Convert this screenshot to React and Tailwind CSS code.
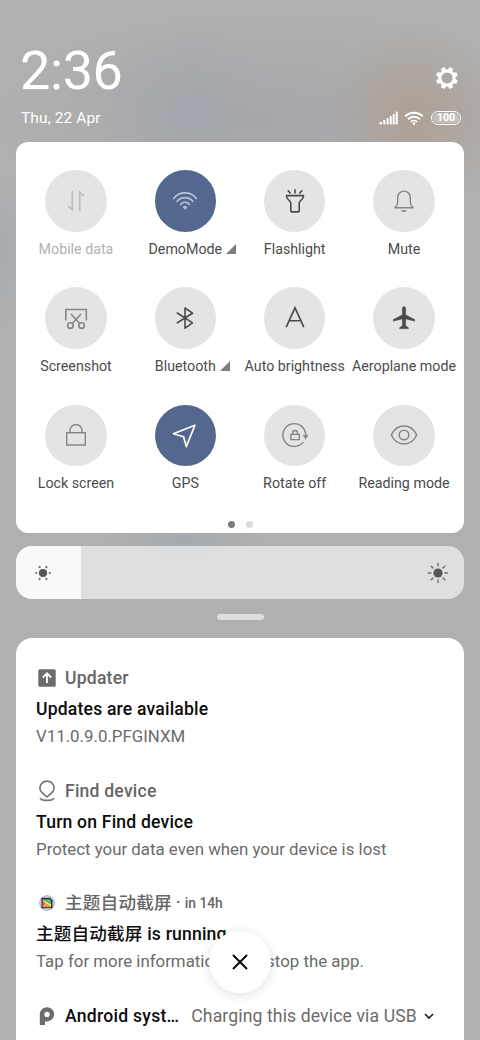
import React from 'react';
import clsx from 'clsx';

const Icon = ({ children, className }) => (
  <svg
    viewBox="0 0 32 32"
    className={clsx('w-8 h-8', className)}
    fill="none"
    stroke="currentColor"
    strokeWidth="1.6"
    strokeLinecap="round"
    strokeLinejoin="round"
  >
    {children}
  </svg>
);

const icons = {
  data: (
    <g strokeWidth="1.7" strokeLinecap="butt" strokeLinejoin="miter">
      <path d="M12.3 5.8v19.4" />
      <path d="M13 26.6L7.4 21.6l1.2-1.2 4.400 3.400z" fill="currentColor" stroke="none" />
      <path d="M19.7 26.500V7" />
      <path d="M19 5.400l5.600 5-1.200 1.200-4.400-3.400z" fill="currentColor" stroke="none" />
    </g>
  ),
  wifi: (
    <g>
      <path d="M4.6 13.4a14.6 14.6 0 0 1 22.8 0" />
      <path d="M8.1 16.4a10.2 10.2 0 0 1 15.8 0" />
      <path d="M11.5 19.4a5.9 5.9 0 0 1 9 0" />
      <path d="M16 24l-1.900-1.900a2.800 2.800 0 0 1 3.800 0z" fill="currentColor" strokeWidth="1" />
    </g>
  ),
  flashlight: (
    <g>
      <path d="M9.2 5.800l1.900 2.300M16 4.800v3.200M22.800 5.800l-1.900 2.300" />
      <path d="M7.600 10.600h16.800v1.200c0 2.800-4.200 3.600-4.200 6.400v7.700c0 .6-.4 1-1 1h-6.400c-.6 0-1-.4-1-1v-7.700c0-2.800-4.200-3.600-4.200-6.400z" />
    </g>
  ),
  bell: (
    <g strokeWidth="1.4">
      <path d="M7 22.800c1.800-1.600 2.700-3.400 2.700-5.800v-4.600a6.300 6.300 0 0 1 12.600 0V17c0 2.400.9 4.200 2.700 5.800z" />
      <path d="M13.800 25.600h4.400l-1.200 1h-2z" fill="currentColor" strokeWidth="0.8" />
    </g>
  ),
  screenshot: (
    <g strokeLinecap="butt" strokeLinejoin="miter">
      <path d="M5.800 18.400V7.500h20.500v10.900" />
      <path d="M11 12l8.700 9.500M21 12l-8.700 9.500" />
      <circle cx="10.400" cy="23.600" r="2.800" />
      <circle cx="21.600" cy="23.600" r="2.800" />
    </g>
  ),
  bluetooth: <path d="M8.300 11l15.200 9.800-7.500 5.400V6l7.500 5.200L8.300 20.800" />,
  auto: <path d="M7.200 25.200L16 5.800l8.800 19.400M10 18.800h12" strokeLinejoin="miter" strokeLinecap="butt" />,
  plane: (
    <path
      d="M16 4.600c1 0 1.700.9 1.700 2v6.200l9 4.800v1.700l-9-2.400v6.800l2.700 1.800v1.300h-8.800v-1.300l2.700-1.800v-6.800l-9 2.400v-1.700l9-4.800V6.600c0-1.100.7-2 1.700-2z"
      fill="currentColor"
      strokeWidth="0.3"
    />
  ),
  lock: (
    <g strokeWidth="1.4" strokeLinejoin="miter">
      <rect x="6.700" y="13.700" width="18.600" height="12.300" />
      <path d="M10 13.700v-2.200a6 6 0 0 1 12 0v2.200" />
    </g>
  ),
  gps: <path d="M25.900 6.200L4.400 14.800l10.200 3 2.700 9.800z" strokeWidth="1.700" />,
  rotate: (
    <g strokeWidth="1.4">
      <path d="M24 23.400A11.400 11.400 0 1 1 26.700 16" />
      <path d="M24.300 16.200h4.800l-2.400 3.800z" fill="currentColor" strokeWidth="0.500" />
      <rect x="11.900" y="15.400" width="8.400" height="5.200" />
      <path d="M13.700 15.200v-1.300a2.400 2.400 0 0 1 4.800 0v1.300" />
    </g>
  ),
  eye: (
    <g strokeWidth="1.500">
      <path d="M3.300 16C6 10.300 10.600 7 16 7s10 3.300 12.700 9C26 21.700 21.400 25 16 25S6 21.700 3.300 16z" />
      <circle cx="16" cy="16" r="4.800" />
    </g>
  ),
};

const tiles = [
  { icon: 'data', label: 'Mobile data', tone: 'text-[#bdbdbd]', text: 'text-[#b2b2b2]' },
  { icon: 'wifi', label: 'DemoMode', on: true, tone: 'text-[#b9c3d8]', more: true },
  { icon: 'flashlight', label: 'Flashlight', tone: 'text-[#4a4a4a]' },
  { icon: 'bell', label: 'Mute', tone: 'text-[#858585]' },
  { icon: 'screenshot', label: 'Screenshot', tone: 'text-[#858585]' },
  { icon: 'bluetooth', label: 'Bluetooth', tone: 'text-[#4a4a4a]', more: true },
  { icon: 'auto', label: 'Auto brightness', tone: 'text-[#4a4a4a]' },
  { icon: 'plane', label: 'Aeroplane mode', tone: 'text-[#4a4a4a]' },
  { icon: 'lock', label: 'Lock screen', tone: 'text-[#858585]' },
  { icon: 'gps', label: 'GPS', on: true, tone: 'text-white' },
  { icon: 'rotate', label: 'Rotate off', tone: 'text-[#858585]' },
  { icon: 'eye', label: 'Reading mode', tone: 'text-[#858585]' },
];

const Tile = ({ icon, label, on, tone, text = 'text-[#4c4c4c]', more }) => (
  <div className="flex flex-col items-center h-[117.3px]">
    <div
      className={clsx(
        'w-[61.5px] h-[61.5px] rounded-full flex items-center justify-center',
        on ? 'bg-[#54678f]' : 'bg-[#e4e4e4]',
        tone
      )}
    >
      <Icon>{icons[icon]}</Icon>
    </div>
    <div className={clsx('relative mt-[7.200px] text-[14.25px] leading-5 whitespace-nowrap', text)}>
      {label}
      {more && (
        <svg viewBox="0 0 10 10" className="absolute left-full top-[5px] ml-1 w-2.5 h-2.5 text-[#7d7d7d]">
          <path d="M10 0v10H0z" fill="currentColor" />
        </svg>
      )}
    </div>
  </div>
);

const GearIcon = () => (
  <svg viewBox="0 0 24 24" className="w-6 h-6" fill="none" stroke="currentColor">
    <circle cx="12" cy="12" r="7.1" strokeWidth="3" />
    {[22.5, 67.5, 112.5, 157.5, 202.5, 247.5, 292.5, 337.5].map((a) => (
      <path key={a} d="M9.700 4.200L10.200 1.200h3.600l.500 3z" transform={`rotate(${a} 12 12)`} fill="currentColor" strokeWidth="0.300" />
    ))}
  </svg>
);

const SignalIcon = () => (
  <svg viewBox="0 0 19 14" className="w-[19px] h-3.5" fill="currentColor">
    <rect x="0.500" y="11" width="2.500" height="2.500" rx="0.800" />
    <rect x="4.300" y="9" width="2" height="4.500" rx="0.600" />
    <rect x="7.600" y="7" width="2" height="6.500" rx="0.600" />
    <rect x="10.700" y="5" width="2" height="8.500" rx="0.600" />
    <rect x="13.700" y="3" width="2" height="10.500" rx="0.600" />
    <rect x="16.700" y="0.500" width="2" height="13" rx="0.600" />
  </svg>
);

const StatusWifi = () => (
  <svg viewBox="0 0 20 14" className="w-5 h-3.5" fill="none" stroke="currentColor" strokeWidth="2">
    <path d="M1.200 5.300a12.400 12.400 0 0 1 17.600 0" />
    <path d="M4.100 8.300a8.300 8.300 0 0 1 11.800 0" />
    <path d="M6.900 10.900a4.500 4.500 0 0 1 6.200 0" strokeWidth="1.600" />
    <circle cx="10" cy="12.600" r="1.300" fill="currentColor" stroke="none" />
  </svg>
);

const Sun = ({ big }) => {
  const angles = big ? [0, 45, 90, 135, 180, 225, 270, 315] : [30, 90, 150, 210, 270, 330];
  return (
    <svg viewBox="0 0 22 22" className="w-[22px] h-[22px] text-[#555]" stroke="currentColor" strokeLinecap="round">
      <circle cx="11" cy="11" r={big ? 4.6 : 4.1} fill="currentColor" stroke="none" />
      {angles.map((a) => (
        <path
          key={a}
          d={big ? 'M11 4V1.400' : 'M11 4.300v-.2'}
          strokeWidth={big ? 1.4 : 2.2}
          opacity="0.8"
          transform={`rotate(${a} 11 11)`}
        />
      ))}
    </svg>
  );
};

const UpdaterIcon = () => (
  <svg viewBox="0 0 18 18" className="w-[18px] h-[18px]" fill="none">
    <rect x="0.300" y="0.300" width="17.400" height="17.400" rx="1.500" fill="#6c6c6c" />
    <path d="M9 14V4.500M4.800 8.500L9 4.300l4.200 4.200" stroke="#fff" strokeWidth="1.800" />
  </svg>
);

const FindIcon = () => (
  <svg viewBox="0 0 18 22" className="w-[18px] h-[22px]" fill="none" stroke="#777" strokeWidth="1.700">
    <path d="M9 16.800C6 14.400 1.900 12 1.900 8.200a7.100 7.100 0 0 1 14.200 0c0 3.800-4.100 6.200-7.100 8.600z" />
    <path d="M2 18.300c1.200 1.500 3 2 4.500 2h5c1.500 0 3.300-.5 4.500-2" />
  </svg>
);

const ThemeIcon = () => (
  <svg viewBox="0 0 16 16" className="w-4 h-4">
    <circle cx="8" cy="8" r="7.300" fill="#dbe4ee" stroke="#8098b5" strokeWidth="0.800" />
    <path d="M2.500 2.800h8.500l2.500 2.500v7.900h-11z" fill="#222b38" />
    <path d="M3.800 4.200L12 9v3H3.800z" fill="#f0e34a" />
    <path d="M3.800 5.200v6.800l3-3.200z" fill="#ef4fa6" />
    <path d="M4 4.200h6.800L12 6v3z" fill="#45c77a" />
    <path d="M4.500 12.200l3.500-3.500 4 3.500z" fill="#f08a3c" />
  </svg>
);

const AndroidP = () => (
  <svg viewBox="0 0 16 20" className="w-4 h-5">
    <path
      d="M.8 19V8.500A7.300 7.300 0 0 1 8 1.200a7.100 7.100 0 0 1 0 14.200H6V19z M8 5.800a2.600 2.600 0 1 0 0 5.200a2.600 2.600 0 0 0 0-5.200z"
      fill="#6c6c6c"
      fillRule="evenodd"
    />
  </svg>
);

const Notification = ({ icon, app, time, title, body }) => (
  <div className="h-[112.4px]">
    <div className="flex items-center h-[26px] text-[#666] font-medium">
      <div className="w-[22px] mr-[7px] flex justify-center">{icon}</div>
      <span className="tracking-[0.2px]">{app}</span>
      {time && (
        <span className="ml-1 text-[17px]">
          · <span className="text-[13.8px]">{time}</span>
        </span>
      )}
    </div>
    <div className="mt-[5.300px] h-[26px] leading-[26px] font-medium tracking-[0.18px] text-[#0c0c0c]">{title}</div>
    <div className="mt-[0.800px] h-[26px] leading-[26px] text-[16.850px] text-[#6b6b6b]">{body}</div>
  </div>
);

const App = () => (
  <div className="relative w-[480px] h-[1040px] overflow-hidden flex flex-col px-4 bg-[#b0b0b0] bg-[radial-gradient(circle_at_415px_115px,#b09c8ab0_0,#b09c8a60_45px,#b09c8a00_90px),radial-gradient(circle_at_185px_112px,#9ca2ac80_0,#9ca2ac00_90px),radial-gradient(ellipse_280px_110px_at_270px_120px,#a4a5aad0_0,#a4a5aa00_100%),radial-gradient(ellipse_80px_30px_at_185px_538px,#9ca3ab90_0,#9ca3ab00_100%),radial-gradient(ellipse_30px_80px_at_0px_250px,#9ea7b190_0,#9ea7b100_100%)] font-['Roboto','Noto_Sans_CJK_SC',sans-serif]">
    <header className="flex justify-between h-[142px] shrink-0 text-white">
      <div className="pl-[5px] pt-[39px]">
        <div className="text-[54px] leading-[64px] h-[66px] -ml-px tracking-[-0.4px]">2:36</div>
        <div className="mt-[3px] text-[15.5px] leading-5 tracking-[0.1px]">Thu, 22 Apr</div>
      </div>
      <div className="flex flex-col items-end pt-[66px] pr-[3px]">
        <div className="pr-0.5">
          <GearIcon />
        </div>
        <div className="flex items-center mt-[21px]">
          <SignalIcon />
          <div className="ml-1.5">
            <StatusWifi />
          </div>
          <div className="ml-[7px] w-[30px] h-[13.5px] rounded-full border-[1.5px] border-white p-px">
            <div className="h-full rounded-full bg-white/30 flex items-center justify-center text-[10.5px] leading-none font-bold">100</div>
          </div>
        </div>
      </div>
    </header>

    <section className="h-[391px] shrink-0 rounded-xl bg-white px-[5.3px] pt-7 flex flex-col">
      <div className="grid grid-cols-4 h-[350px]">
        {tiles.map((t) => (
          <Tile key={t.icon} {...t} />
        ))}
      </div>
      <div className="flex justify-center gap-[11px] pt-px">
        <div className="w-[7px] h-[7px] rounded-full bg-[#7c7c7c]" />
        <div className="w-[7px] h-[7px] rounded-full bg-[#dadada]" />
      </div>
    </section>

    <div className="mt-[13px] h-[53px] shrink-0 rounded-2xl overflow-hidden bg-white/60 flex items-center justify-between pr-[15.500px]">
      <div className="w-[64.500px] h-full bg-[#f9f9f9] flex items-center pl-4">
        <Sun />
      </div>
      <Sun big />
    </div>

    <div className="mt-[15px] mx-auto w-[47px] h-1.5 shrink-0 rounded-full bg-[#dedede]" />

    <section className="mt-[17.500px] grow rounded-t-2xl bg-white px-5 pt-[27.700px] text-[17.600px] leading-[26px] whitespace-nowrap">
      <Notification icon={<UpdaterIcon />} app="Updater" title="Updates are available" body="V11.0.9.0.PFGINXM" />
      <Notification
        icon={<FindIcon />}
        app="Find device"
        title="Turn on Find device"
        body="Protect your data even when your device is lost"
      />
      <Notification
        icon={<ThemeIcon />}
        app="主题自动截屏"
        time="in 14h"
        title="主题自动截屏 is running"
        body="Tap for more information or to stop the app."
      />
      <div className="flex items-center h-[26px] pt-px">
        <div className="w-[22px] mr-[7px] flex justify-center">
          <AndroidP />
        </div>
        <span className="font-medium text-[#0c0c0c] tracking-[0.250px]">Android syst…</span>
        <span className="ml-3 text-[#6b6b6b] tracking-[0.120px]">Charging this device via USB</span>
        <svg viewBox="0 0 10 8" className="ml-[7px] w-2.5 h-2" fill="none" stroke="#222" strokeWidth="1.700">
          <path d="M1 2l4 4 4-4" />
        </svg>
      </div>
    </section>

    <button className="absolute left-[209px] top-[931px] w-[62px] h-[62px] rounded-full bg-white shadow-[0_2px_12px_rgba(0,0,0,0.12)] flex items-center justify-center">
      <svg viewBox="0 0 16 16" className="w-4 h-4" stroke="#000" strokeWidth="1.800" strokeLinecap="round">
        <path d="M1.500 1.500l13 13M14.500 1.500l-13 13" />
      </svg>
    </button>
  </div>
);

export default App;
